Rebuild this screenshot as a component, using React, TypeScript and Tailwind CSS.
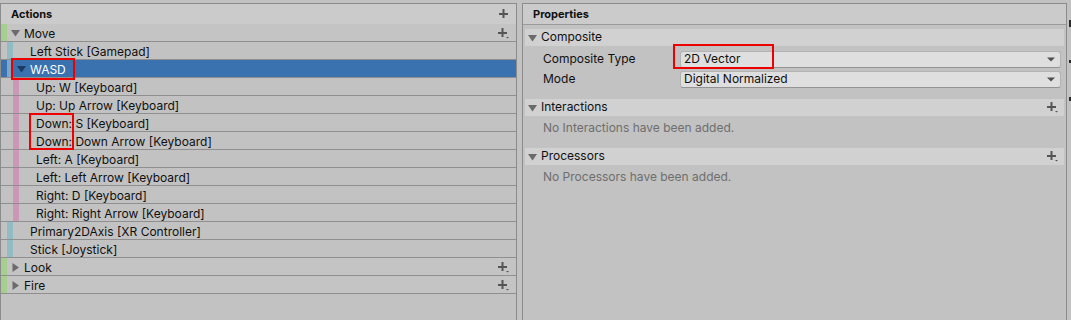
import React from "react";

const FONT = { fontFamily: "Inter, 'Noto Sans', Arial, sans-serif" };

function Plus() {
  return (
    <svg width="10" height="10" viewBox="0 0 10 10" className="block">
      <rect x="0" y="4" width="9" height="2" fill="#555555" />
      <rect x="3.5" y="0" width="2" height="9" fill="#555555" />
    </svg>
  );
}

function PlusDrop() {
  return (
    <svg width="12" height="11" viewBox="0 0 12 11" className="block">
      <rect x="0" y="4" width="9" height="2" fill="#555555" />
      <rect x="3.5" y="0" width="2" height="9" fill="#555555" />
      <path d="M8 9 L11 9 L9.5 10.5 Z" fill="#555555" />
    </svg>
  );
}

function TriDown({ color = "#6b6b6b" }: { color?: string }) {
  return (
    <svg width="9" height="8" viewBox="0 0 9 8" className="block">
      <path d="M0 1 L9 1 L4.5 7.5 Z" fill={color} />
    </svg>
  );
}

function TriRight({ color = "#6b6b6b" }: { color?: string }) {
  return (
    <svg width="9" height="9" viewBox="0 0 9 9" className="block">
      <path d="M1.5 0 L8 4.5 L1.5 9 Z" fill={color} />
    </svg>
  );
}

function Arrow() {
  return (
    <svg width="8" height="5" viewBox="0 0 8 5" className="block">
      <path d="M0 0.5 L8 0.5 L4 4.5 Z" fill="#4f4f4f" />
    </svg>
  );
}

type Row = {
  type: "action" | "binding" | "composite" | "part";
  label: string;
  open?: boolean;
  selected?: boolean;
};

const rows: Row[] = [
  { type: "action", label: "Move", open: true },
  { type: "binding", label: "Left Stick [Gamepad]" },
  { type: "composite", label: "WASD", selected: true },
  { type: "part", label: "Up: W [Keyboard]" },
  { type: "part", label: "Up: Up Arrow [Keyboard]" },
  { type: "part", label: "Down: S [Keyboard]" },
  { type: "part", label: "Down: Down Arrow [Keyboard]" },
  { type: "part", label: "Left: A [Keyboard]" },
  { type: "part", label: "Left: Left Arrow [Keyboard]" },
  { type: "part", label: "Right: D [Keyboard]" },
  { type: "part", label: "Right: Right Arrow [Keyboard]" },
  { type: "binding", label: "Primary2DAxis [XR Controller]" },
  { type: "binding", label: "Stick [Joystick]" },
  { type: "action", label: "Look", open: false },
  { type: "action", label: "Fire", open: false },
];

function TreeRow({ r }: { r: Row }) {
  const sel = !!r.selected;
  const bg = sel ? "bg-[#3a72b0] text-white" : r.type === "action" ? "bg-[#c4c4c4] text-[#101010]" : "bg-[#c2c2c2] text-[#101010]";
  return (
    <div className={`flex h-[18px] items-stretch border-b border-[#8f8f8f] text-[12px] leading-none ${bg}`}>
      <div className={`w-[6px] shrink-0 ${r.type === "action" ? "bg-[#a6cf8f]" : ""}`} />
      {r.type === "action" ? (
        <>
          <div className="ml-[4px] flex items-center pt-[1px]">
            {r.open ? <TriDown /> : <TriRight />}
          </div>
          <div className="ml-[4px] flex items-center pt-[2px]">{r.label}</div>
          <div className="ml-auto mr-[6px] flex items-center pt-[1px]">
            <PlusDrop />
          </div>
        </>
      ) : (
        <>
          <div
            className={`w-[6px] shrink-0 ${
              r.type === "binding" ? "bg-[#92bcc3]" : r.type === "composite" ? (sel ? "bg-[#7fa8c8]" : "bg-[#92bcc3]") : ""
            }`}
          />
          {r.type === "part" ? (
            <>
              <div className="w-[6px] shrink-0 bg-[#cb97b6]" />
              <div className="ml-[17px] flex items-center pt-[2px]">{r.label}</div>
            </>
          ) : r.type === "composite" ? (
            <>
              <div className="ml-[4px] flex items-center pt-[1px]">
                <TriDown color={sel ? "#1c3a63" : "#6b6b6b"} />
              </div>
              <div className="ml-[4px] flex items-center pt-[2px]">{r.label}</div>
            </>
          ) : (
            <div className="ml-[17px] flex items-center pt-[2px]">{r.label}</div>
          )}
        </>
      )}
    </div>
  );
}

function Foldout({ label, plus }: { label: string; plus?: boolean }) {
  return (
    <div className="mx-[2px] flex h-[17px] items-center bg-[#d1d1d1] text-[12px] text-[#101010]">
      <div className="ml-[3px]">
        <TriDown />
      </div>
      <div className="ml-[4px] pb-[1px] leading-none">{label}</div>
      {plus && (
        <div className="ml-auto mr-[5px]">
          <PlusDrop />
        </div>
      )}
    </div>
  );
}

function Dropdown({ value }: { value: string }) {
  return (
    <div className="mr-[5px] flex h-[17px] flex-1 items-center rounded-[3px] border border-[#b3b3b3] border-b-[#939393] bg-[#dfdfdf] pl-[3px] pr-[5px] text-[12px] leading-none text-[#101010]">
      <span className="pb-[1px]">{value}</span>
      <span className="ml-auto">
        <Arrow />
      </span>
    </div>
  );
}

export default function App() {
  return (
    <div className="relative flex h-[320px] w-[1071px] overflow-hidden bg-[#c2c2c2] pt-[3px]" style={FONT}>
      {/* Left panel */}
      <div className="flex h-full w-[517px] shrink-0 flex-col border-l border-r border-t border-[#8c8c8c]">
        <div className="flex h-[20px] items-center bg-[#cbcbcb] pl-[10px] text-[11px] font-bold text-[#101010]">
          <span>Actions</span>
          <span className="ml-auto mr-[7px]">
            <Plus />
          </span>
        </div>
        {rows.map((r, i) => (
          <TreeRow key={i} r={r} />
        ))}
      </div>

      <div className="w-[5px] shrink-0" />

      {/* Right panel */}
      <div className="flex h-full w-[545px] shrink-0 flex-col border-l border-r border-t border-[#8c8c8c]">
        <div className="flex h-[21px] items-center border-b border-[#9a9a9a] bg-[#cbcbcb] pl-[10px] text-[11px] font-bold text-[#101010]">
          Properties
        </div>
        <div className="mt-[4px]">
          <Foldout label="Composite" />
        </div>
        <div className="mt-[5px] flex items-center">
          <div className="w-[157px] shrink-0 pb-[2px] pl-[20px] text-[12px] leading-none text-[#101010]">Composite Type</div>
          <Dropdown value="2D Vector" />
        </div>
        <div className="mt-[3px] flex items-center">
          <div className="w-[157px] shrink-0 pb-[2px] pl-[20px] text-[12px] leading-none text-[#101010]">Mode</div>
          <Dropdown value="Digital Normalized" />
        </div>
        <div className="mt-[11px]">
          <Foldout label="Interactions" plus />
        </div>
        <div className="mt-[2px] flex h-[20px] items-center pl-[20px] text-[12px] leading-none text-[#6e6e6e]">
          No Interactions have been added.
        </div>
        <div className="mt-[10px]">
          <Foldout label="Processors" plus />
        </div>
        <div className="mt-[2px] flex h-[20px] items-center pl-[20px] text-[12px] leading-none text-[#6e6e6e]">
          No Processors have been added.
        </div>
      </div>

      {/* right edge */}
      <div className="flex w-[4px] shrink-0 flex-col">
        <div className="h-[17px]" />
        <div className="ml-[2px] h-[7px] bg-[#2a2a2a]" />
        <div className="h-[33px]" />
        <div className="ml-[2px] h-[3px] bg-[#2a2a2a]" />
        <div className="h-[34px]" />
        <div className="ml-[2px] h-[4px] bg-[#2a2a2a]" />
      </div>

      {/* red annotation boxes */}
      <div className="pointer-events-none absolute left-[11px] top-[58px] h-[22px] w-[64px] border-2 border-[#ee0000]" />
      <div className="pointer-events-none absolute left-[29px] top-[113px] h-[37px] w-[45px] border-2 border-[#ee0000]" />
      <div className="pointer-events-none absolute left-[673px] top-[44px] h-[25px] w-[101px] border-2 border-[#ee0000]" />
    </div>
  );
}
